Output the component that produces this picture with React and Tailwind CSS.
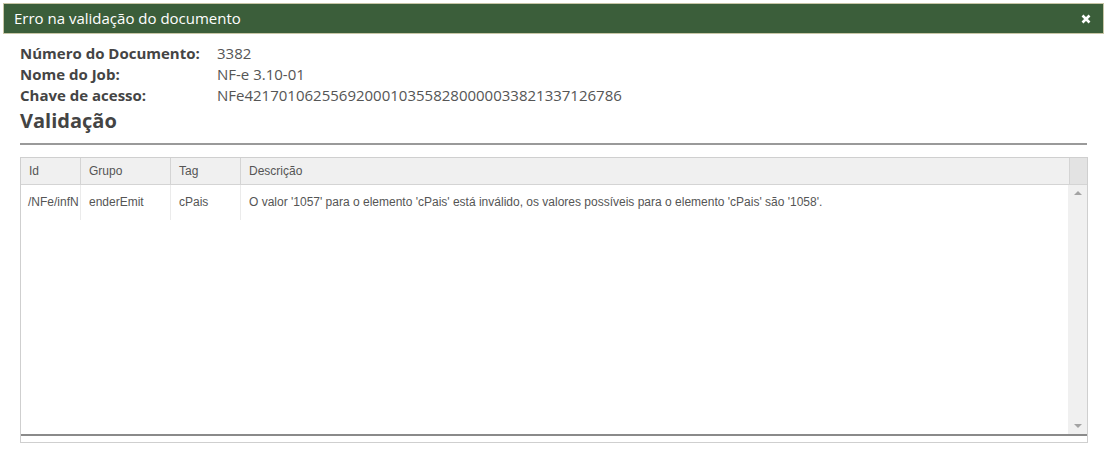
import React from 'react';

const rows = [
  {
    id: '/NFe/infNFe/emit/enderEmit/cPais',
    grupo: 'enderEmit',
    tag: 'cPais',
    descricao:
      "O valor '1057' para o elemento 'cPais' está inválido, os valores possíveis para o elemento 'cPais' são '1058'.",
  },
];

function Field({ label, value }) {
  return (
    <div className="flex h-[21px] items-center">
      <span className="w-[197px] font-bold text-[#444]">{label}</span>
      <span className="text-[#555]">{value}</span>
    </div>
  );
}

export default function App() {
  return (
    <div className="w-[1107px] h-[464px] bg-white pt-[3px] px-[3px] font-['Open_Sans',sans-serif]">
      <div className="flex h-[31px] items-center justify-between border border-[#c8c6a6] bg-[#3b5e3a] pl-[10px] pr-[12px] text-[15px] text-white">
        <span>Erro na validação do documento</span>
        <svg width="10" height="10" viewBox="0 0 10 10">
          <path d="M1.5 1.5 L8.5 8.5 M8.5 1.5 L1.5 8.5" stroke="white" strokeWidth="2.6" />
        </svg>
      </div>

      <div className="px-[17px] pt-[9px] text-[15px] leading-[21px]">
        <Field label="Número do Documento:" value="3382" />
        <Field label="Nome do Job:" value="NF-e 3.10-01" />
        <Field label="Chave de acesso:" value="NFe42170106255692000103558280000033821337126786" />
        <h2 className="mt-[1px] h-[28px] text-[20px] font-bold leading-[28px] text-[#444]">Validação</h2>
        <div className="mt-[8px] h-[2px] bg-[#9a9a9a]" />

        <div className="mt-[12px] flex h-[286px] w-[1068px] flex-col border border-[#cfcfcf] font-['Liberation_Sans',sans-serif] text-[12px] text-[#555]">
          <div className="flex h-[27px] border-b border-[#d4d4d4] bg-[#f0f0f0]">
            <div className="flex w-[60px] items-center border-r border-[#d4d4d4] px-[8px]">Id</div>
            <div className="flex w-[90px] items-center border-r border-[#d4d4d4] px-[8px]">Grupo</div>
            <div className="flex w-[70px] items-center border-r border-[#d4d4d4] px-[8px]">Tag</div>
            <div className="flex flex-1 items-center border-r border-[#d4d4d4] px-[8px]">Descrição</div>
            <div className="w-[17px] bg-[#e3e3e3]" />
          </div>
          <div className="flex flex-1">
            <div className="flex-1">
              {rows.map((r) => (
                <div key={r.id} className="flex h-[35px]">
                  <div className="flex w-[60px] items-center overflow-hidden whitespace-nowrap border-r border-[#ebebeb] pl-[7px]">
                    {r.id.slice(0, 9)}
                  </div>
                  <div className="flex w-[90px] items-center border-r border-[#ebebeb] px-[8px]">{r.grupo}</div>
                  <div className="flex w-[70px] items-center border-r border-[#ebebeb] px-[8px]">{r.tag}</div>
                  <div className="flex flex-1 items-center px-[8px] text-[12px]">{r.descricao}</div>
                </div>
              ))}
            </div>
            <div className="flex w-[19px] flex-col items-center justify-between bg-[#f0f0f0] py-[6px]">
              <svg width="8" height="4" viewBox="0 0 8 4">
                <path d="M0 4 L4 0 L8 4 Z" fill="#a3a3a3" />
              </svg>
              <svg width="8" height="4" viewBox="0 0 8 4">
                <path d="M0 0 L8 0 L4 4 Z" fill="#a3a3a3" />
              </svg>
            </div>
          </div>
          <div className="h-[2px] bg-[#8a8a8a]" />
          <div className="h-[6px]" />
        </div>
      </div>
    </div>
  );
}
